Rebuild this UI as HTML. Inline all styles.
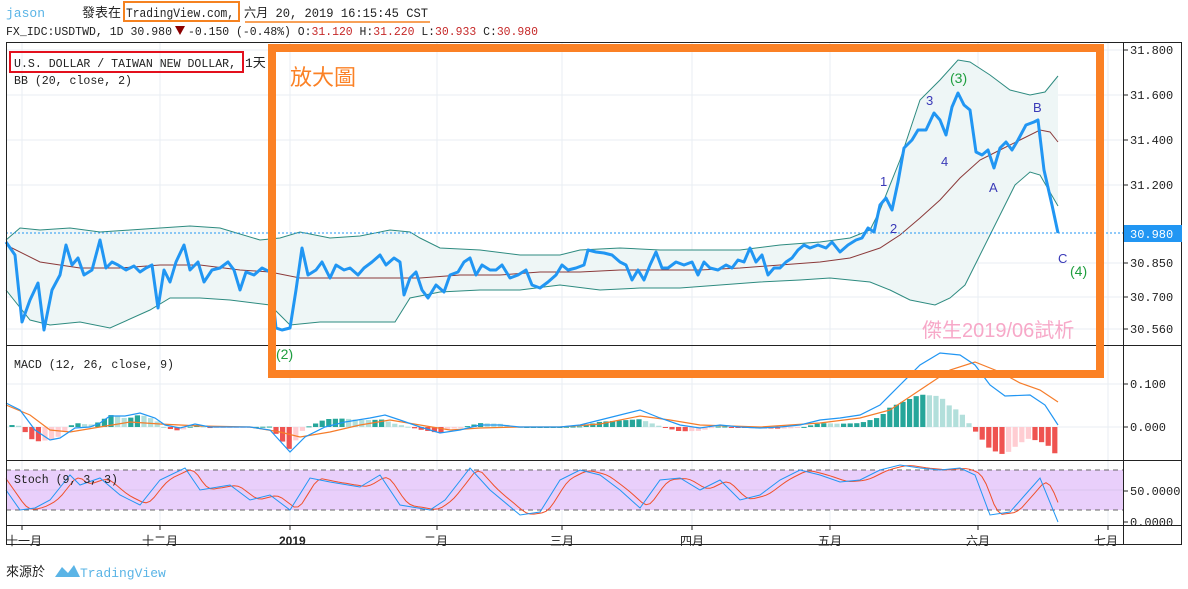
<!DOCTYPE html>
<html><head><meta charset="utf-8">
<style>
body{margin:0;background:#fff;width:1188px;height:589px;overflow:hidden;font-family:"Liberation Mono","Noto Sans CJK TC",monospace;}
svg{position:absolute;left:0;top:0}
</style></head><body>
<svg id="s" width="1188" height="589" xmlns="http://www.w3.org/2000/svg" font-family="Liberation Mono, Noto Sans CJK TC, monospace">
<g stroke="#e8eef3" stroke-width="1">
<line x1="6" y1="50" x2="1123" y2="50"/><line x1="6" y1="95" x2="1123" y2="95"/><line x1="6" y1="140" x2="1123" y2="140"/><line x1="6" y1="185" x2="1123" y2="185"/><line x1="6" y1="263" x2="1123" y2="263"/><line x1="6" y1="297" x2="1123" y2="297"/><line x1="6" y1="329" x2="1123" y2="329"/>
<line x1="6" y1="384" x2="1123" y2="384"/><line x1="6" y1="427" x2="1123" y2="427"/>
<line x1="22" y1="42" x2="22" y2="525"/><line x1="160" y1="42" x2="160" y2="525"/><line x1="290" y1="42" x2="290" y2="525"/><line x1="437" y1="42" x2="437" y2="525"/><line x1="562" y1="42" x2="562" y2="525"/><line x1="692" y1="42" x2="692" y2="525"/><line x1="830" y1="42" x2="830" y2="525"/><line x1="978" y1="42" x2="978" y2="525"/><line x1="1108" y1="42" x2="1108" y2="525"/>
</g>
<rect x="6" y="470" width="1117" height="40" fill="#e9cffb"/>
<line x1="6" y1="490" x2="1123" y2="490" stroke="#d9c6ee"/>
<line x1="6" y1="470" x2="1123" y2="470" stroke="#666" stroke-dasharray="5,4"/>
<line x1="6" y1="510" x2="1123" y2="510" stroke="#666" stroke-dasharray="5,4"/>
<g id="dyn"></g>
<line x1="6" y1="233" x2="1123" y2="233" stroke="#2196f3" stroke-dasharray="2,2"/>
<g fill="none" stroke="#222" stroke-width="1">
<rect x="6.5" y="42.5" width="1175" height="502"/>
<line x1="1123.5" y1="42" x2="1123.5" y2="545"/>
<line x1="6" y1="345.5" x2="1182" y2="345.5"/>
<line x1="6" y1="460.5" x2="1182" y2="460.5"/>
<line x1="6" y1="525.5" x2="1182" y2="525.5"/>
</g>
<g stroke="#222"><line x1="1123" y1="50" x2="1128" y2="50"/><line x1="1123" y1="95" x2="1128" y2="95"/><line x1="1123" y1="140" x2="1128" y2="140"/><line x1="1123" y1="185" x2="1128" y2="185"/><line x1="1123" y1="263" x2="1128" y2="263"/><line x1="1123" y1="297" x2="1128" y2="297"/><line x1="1123" y1="329" x2="1128" y2="329"/><line x1="1123" y1="384" x2="1128" y2="384"/><line x1="1123" y1="427" x2="1128" y2="427"/><line x1="1123" y1="491" x2="1128" y2="491"/><line x1="1123" y1="522" x2="1128" y2="522"/>
<line x1="22" y1="525" x2="22" y2="530"/><line x1="160" y1="525" x2="160" y2="530"/><line x1="290" y1="525" x2="290" y2="530"/><line x1="437" y1="525" x2="437" y2="530"/><line x1="562" y1="525" x2="562" y2="530"/><line x1="692" y1="525" x2="692" y2="530"/><line x1="830" y1="525" x2="830" y2="530"/><line x1="978" y1="525" x2="978" y2="530"/><line x1="1108" y1="525" x2="1108" y2="530"/></g>
<g font-size="12" fill="#222">
<text x="1130" y="54">31.800</text><text x="1130" y="99">31.600</text><text x="1130" y="144">31.400</text><text x="1130" y="189">31.200</text><text x="1130" y="267">30.850</text><text x="1130" y="301">30.700</text><text x="1130" y="333">30.560</text><text x="1130" y="388">0.100</text><text x="1130" y="431">0.000</text><text x="1130" y="495">50.0000</text><text x="1130" y="526">0.0000</text>
</g>
<rect x="1124" y="225" width="58" height="17" fill="#2196f3"/>
<text x="1130" y="238" font-size="12" fill="#fff">30.980</text>
<g font-size="12" fill="#222" font-family="Liberation Sans, Noto Sans CJK TC, sans-serif">
<text x="6" y="545">十一月</text><text x="142" y="545">十二月</text><text x="279" y="545" font-weight="bold">2019</text><text x="424" y="545">二月</text><text x="550" y="545">三月</text><text x="680" y="545">四月</text><text x="818" y="545">五月</text><text x="966" y="545">六月</text><text x="1094" y="545">七月</text>
</g>
<!-- header -->
<text x="6" y="17" font-size="13" fill="#5ab4e6">jason</text>
<text x="82" y="17" font-size="13" fill="#222">發表在</text>
<rect x="124" y="2" width="115" height="19" fill="none" stroke="#f58220" stroke-width="2"/>
<text x="126" y="17" font-size="12.5" fill="#222" textLength="108" lengthAdjust="spacingAndGlyphs">TradingView.com,</text>
<text x="244" y="17" font-size="12.5" fill="#222" textLength="184" lengthAdjust="spacingAndGlyphs">六月 20, 2019 16:15:45 CST</text>
<line x1="245" y1="22" x2="430" y2="22" stroke="#f58220" stroke-width="1.5"/>
<text x="6" y="35" font-size="12" fill="#222" textLength="166" lengthAdjust="spacingAndGlyphs">FX_IDC:USDTWD, 1D 30.980</text>
<path d="M175 26 L185 26 L180 35 Z" fill="#8b0000"/>
<text x="188" y="35" font-size="12" fill="#222" textLength="350" lengthAdjust="spacingAndGlyphs">-0.150 (-0.48%) O:<tspan fill="#c62828">31.120</tspan> H:<tspan fill="#c62828">31.220</tspan> L:<tspan fill="#c62828">30.933</tspan> C:<tspan fill="#c62828">30.980</tspan></text>
<rect x="10" y="52" width="233" height="20" fill="none" stroke="#e3101d" stroke-width="2"/>
<text x="14" y="67" font-size="12" fill="#222" textLength="222" lengthAdjust="spacingAndGlyphs">U.S. DOLLAR / TAIWAN NEW DOLLAR,</text>
<text x="245" y="67" font-size="13" fill="#222">1天</text>
<text x="14" y="84" font-size="12" fill="#222" textLength="118" lengthAdjust="spacingAndGlyphs">BB (20, close, 2)</text>
<text x="14" y="368" font-size="12" fill="#222" textLength="160" lengthAdjust="spacingAndGlyphs">MACD (12, 26, close, 9)</text>
<text x="14" y="483" font-size="12" fill="#222" textLength="104" lengthAdjust="spacingAndGlyphs">Stoch (9, 3, 3)</text>
<!-- orange box -->
<rect x="272" y="48" width="828" height="326" fill="none" stroke="#fb8125" stroke-width="8"/>
<text x="290" y="85" font-size="22" fill="#fb8125" font-family="Noto Sans CJK TC, sans-serif">放大圖</text>
<text x="922" y="337" font-size="20" fill="#f7a8c8" font-family="Liberation Sans, Noto Sans CJK TC, sans-serif">傑生2019/06試析</text>
<g font-family="Liberation Sans, sans-serif" font-size="13">
<g fill="#1e9e3e" font-size="14"><text x="276" y="359">(2)</text><text x="950" y="83">(3)</text><text x="1070" y="276">(4)</text></g>
<g fill="#3a3ab8"><text x="880" y="186">1</text><text x="890" y="233">2</text><text x="926" y="105">3</text><text x="941" y="166">4</text><text x="989" y="192">A</text><text x="1033" y="112">B</text><text x="1058" y="263">C</text></g>
</g>
<!-- footer -->
<text x="6" y="576" font-size="13" fill="#222" font-family="Noto Sans CJK TC, sans-serif">來源於</text>
<path d="M55 577 L62 567 L68 573 L74 565 L80 577 Z" fill="#5ab4e6"/>
<text x="80" y="577" font-size="13" fill="#5ab4e6">TradingView</text>
</svg>
<script>
var g=document.getElementById('dyn'),NS='http://www.w3.org/2000/svg';
function P(a){return a.map(function(p){return p[0]+','+p[1]}).join(' ')}
function el(t,at){var e=document.createElementNS(NS,t);for(var k in at)e.setAttribute(k,at[k]);g.appendChild(e);return e}
var up=[[6,240],[20,228],[40,230],[70,228],[100,232],[130,230],[160,228],[190,226],[220,228],[260,240],[280,238],[300,232],[330,238],[360,236],[390,230],[410,232],[420,238],[440,248],[480,250],[520,255],[560,255],[580,250],[620,248],[660,250],[700,250],[740,250],[780,245],[820,242],[850,238],[870,230],[880,210],[900,160],[920,100],[940,80],[958,60],[970,62],[990,75],[1010,90],[1030,95],[1045,92],[1058,76]];
var lo=[[6,290],[30,320],[50,325],[80,322],[110,328],[150,310],[170,298],[200,298],[230,300],[270,305],[290,325],[320,322],[360,322],[395,322],[410,298],[440,292],[480,290],[520,290],[560,285],[600,290],[640,288],[680,288],[720,285],[760,282],[800,280],[830,278],[850,280],[870,282],[890,290],[910,300],[935,305],[950,298],[965,285],[980,255],[1000,215],[1015,185],[1030,172],[1040,175],[1058,206]];
var mid=[[6,245],[40,262],[80,268],[120,268],[160,265],[200,265],[240,270],[270,272],[300,278],[340,278],[380,278],[420,278],[460,275],[500,275],[540,272],[580,272],[620,270],[660,270],[700,270],[740,268],[780,265],[820,262],[850,258],[880,248],[900,235],[920,218],[940,200],[960,178],[980,160],[1000,150],[1020,140],[1040,130],[1050,132],[1058,142]];
el('polygon',{points:P(up.concat(lo.slice().reverse())),fill:'#eef6f6'});
el('polyline',{points:P(up),fill:'none',stroke:'#2e8b80','stroke-width':1});
el('polyline',{points:P(lo),fill:'none',stroke:'#2e8b80','stroke-width':1});
el('polyline',{points:P(mid),fill:'none',stroke:'#8b3a3a','stroke-width':1});
var pr=[[6,242],[15,255],[22,322],[30,300],[38,283],[44,330],[52,290],[60,275],[66,245],[72,265],[78,258],[84,275],[92,270],[100,240],[106,268],[112,262],[118,265],[126,270],[134,266],[140,272],[146,268],[152,265],[158,308],[164,270],[170,282],[176,262],[184,245],[190,270],[198,262],[204,282],[212,270],[220,268],[228,262],[234,270],[240,290],[246,272],[254,275],[262,268],[270,272],[276,328],[282,330],[290,328],[296,290],[302,248],[308,275],[316,270],[322,262],[330,278],[336,265],[344,270],[350,268],[358,275],[364,268],[372,262],[380,255],[386,265],[394,258],[400,262],[404,295],[410,278],[416,272],[422,290],[428,298],[436,285],[444,292],[450,275],[458,272],[464,262],[470,258],[476,275],[482,265],[490,270],[496,270],[502,265],[510,278],[518,275],[526,270],[532,285],[540,288],[548,282],[556,275],[562,265],[568,270],[576,268],[584,265],[588,250],[596,252],[604,253],[612,255],[620,262],[626,265],[632,280],[638,270],[644,280],[650,265],[656,252],[662,268],[668,268],[676,262],[684,265],[692,262],[698,275],[704,262],[710,268],[718,270],[726,265],[732,268],[738,260],[744,262],[750,248],[756,262],[762,255],[768,275],[774,268],[780,268],[786,262],[792,258],[798,250],[804,245],[810,248],[818,245],[826,248],[832,242],[840,252],[848,245],[856,240],[862,238],[868,228],[874,232],[880,205],[886,198],[892,210],[898,182],[904,148],[912,140],[918,130],[926,130],[934,113],[940,120],[946,135],[952,107],[958,93],[964,105],[970,110],[976,152],[982,155],[988,150],[994,168],[1000,148],[1006,142],[1012,150],[1018,140],[1026,125],[1034,122],[1038,120],[1044,170],[1052,205],[1058,233]];
el('polyline',{points:P(pr),fill:'none',stroke:'#2196f3','stroke-width':3,'stroke-linejoin':'round'});
function interp(a,x){for(var i=1;i<a.length;i++){if(x<=a[i][0]){var t=(x-a[i-1][0])/(a[i][0]-a[i-1][0]);return a[i-1][1]+t*(a[i][1]-a[i-1][1])}}return a[a.length-1][1]}
var mc=[[6,403],[20,410],[35,430],[50,440],[60,438],[75,428],[90,427],[100,423],[110,416],[125,416],[140,413],[155,418],[165,425],[180,428],[195,424],[210,427],[250,427],[270,430],[290,452],[305,437],[325,427],[345,422],[370,418],[385,415],[400,420],[420,427],[440,433],[460,430],[480,425],[500,425],[520,427],[560,427],[580,425],[600,420],[620,415],[640,410],[660,418],[680,425],[700,428],[720,425],[740,427],[760,428],[780,427],[800,425],[820,420],[840,418],[860,415],[880,405],[900,385],[920,365],[940,353],[960,355],[975,365],[990,385],[1005,396],[1030,395],[1045,405],[1058,425]];
var sg=[[6,405],[30,415],[50,430],[70,432],[100,427],[130,422],[160,424],[200,426],[250,427],[280,432],[300,437],[330,432],[360,425],[390,420],[420,425],[450,430],[480,428],[520,427],[560,427],[600,424],[640,416],[670,420],[700,425],[760,427],[820,423],[860,418],[890,410],[920,390],[950,370],[975,362],[1000,372],[1020,383],[1040,390],[1058,402]];
var prev=0;
for(var x=12;x<=1058;x+=6.6){var d=(interp(sg,x)-interp(mc,x))*1.3;var col=d>=0?(d>=prev?'#26a69a':'#b2dfdb'):(d<=prev?'#ef5350':'#ffcdd2');
el('rect',{x:x-2.6,y:d>=0?427-d:427,width:5.2,height:Math.max(Math.abs(d),1),fill:col});prev=d;}
el('polyline',{points:P(sg),fill:'none',stroke:'#f57c2a','stroke-width':1.2});
el('polyline',{points:P(mc),fill:'none',stroke:'#2196f3','stroke-width':1.2});
var k=[[6,490],[20,510],[35,508],[50,500],[70,475],[80,485],[100,478],[120,495],[140,505],[160,480],[185,468],[200,490],[230,485],[250,500],[270,495],[290,510],[310,478],[330,482],[360,487],[380,475],[400,505],[430,510],[445,500],[470,468],[490,490],[520,515],[540,512],[560,480],[580,470],[600,475],[620,490],[640,508],[660,480],[680,478],[700,490],[720,480],[740,500],[760,495],[780,480],[800,470],[820,475],[840,482],[860,480],[880,470],[900,465],[920,468],[940,470],[960,468],[975,475],[990,515],[1010,512],[1025,495],[1040,478],[1058,522]];
var dd=[];for(var x=6;x<=1058;x+=4){var v=(interp(k,x-4)+interp(k,x-8)+interp(k,x-12))/3;dd.push([x,v.toFixed(1)])}
el('polyline',{points:P(dd),fill:'none',stroke:'#f0502a','stroke-width':1});
el('polyline',{points:P(k),fill:'none',stroke:'#2196f3','stroke-width':1});
</script>
</body></html>
